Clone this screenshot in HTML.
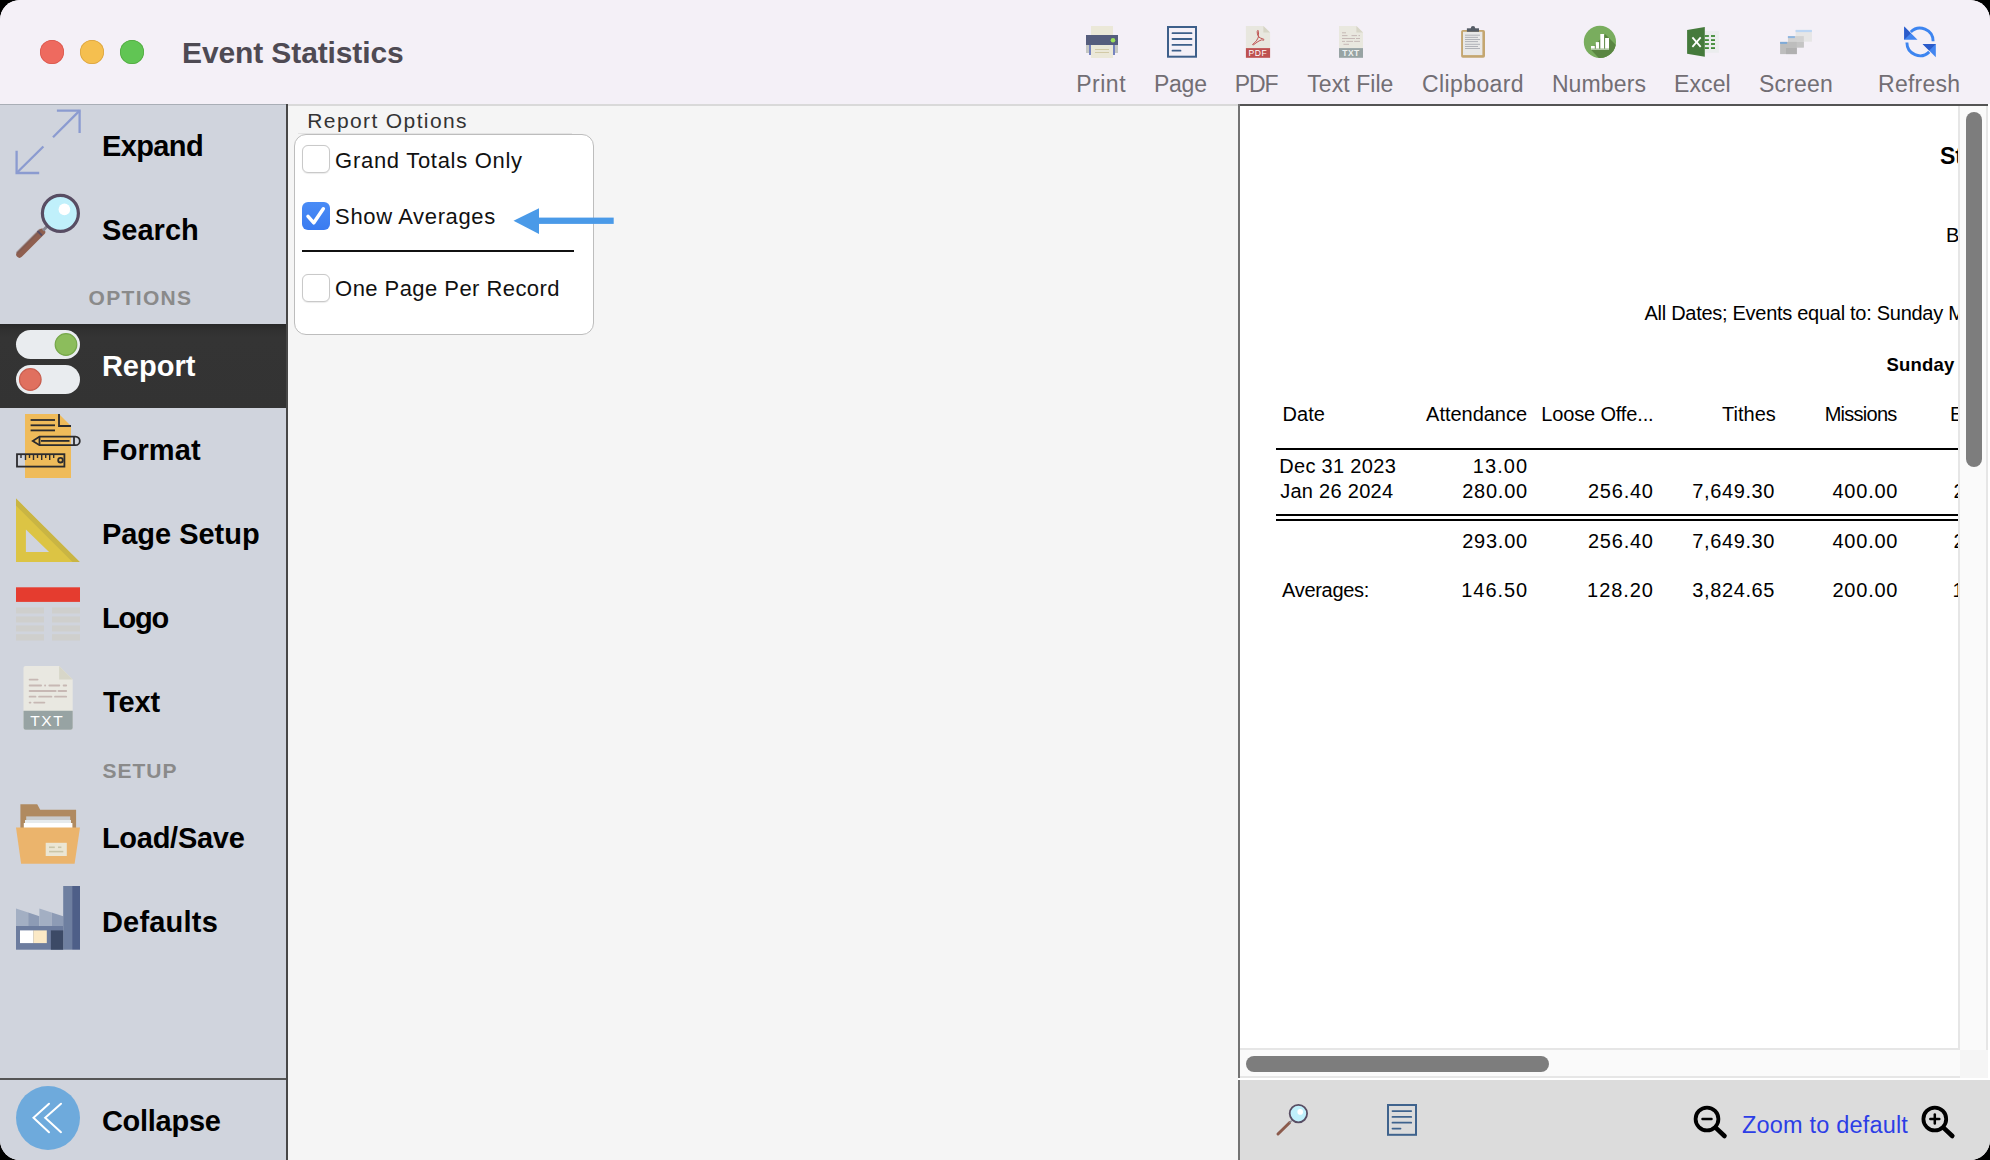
<!DOCTYPE html>
<html><head><meta charset="utf-8"><style>
html,body{margin:0;padding:0;width:1990px;height:1160px;overflow:hidden;background:#000}
.win{position:absolute;left:0;top:0;width:1990px;height:1160px;border-radius:20px;overflow:hidden;background:#f4f0f7}
.t{position:absolute;white-space:nowrap;line-height:1;font-family:"Liberation Sans",sans-serif}
svg text{font-family:"Liberation Sans",sans-serif}
</style></head><body>
<div class="win">
<div style="position:absolute;left:0px;top:0px;width:1990px;height:104px;background:#f4f0f7;"></div>
<div style="position:absolute;left:39.7px;top:39.7px;width:24px;height:24px;border-radius:50%;background:#ee6a5f;box-shadow:inset 0 0 0 0.7px #d8574c"></div>
<div style="position:absolute;left:79.8px;top:39.7px;width:24px;height:24px;border-radius:50%;background:#f5bf4f;box-shadow:inset 0 0 0 0.7px #d9a23f"></div>
<div style="position:absolute;left:119.9px;top:39.7px;width:24px;height:24px;border-radius:50%;background:#61c554;box-shadow:inset 0 0 0 0.7px #50a83f"></div>
<div class="t" style="top:37.71px;font-size:30px;color:#4e4a53;font-weight:bold;letter-spacing:-0.113px;left:182.00px;">Event Statistics</div>
<div class="t" style="top:72.93px;font-size:23px;color:#726e74;letter-spacing:0.485px;left:1076.30px;">Print</div>
<div class="t" style="top:72.93px;font-size:23px;color:#726e74;letter-spacing:-0.260px;left:1154.00px;">Page</div>
<div class="t" style="top:72.93px;font-size:23px;color:#726e74;letter-spacing:-1.120px;left:1234.70px;">PDF</div>
<div class="t" style="top:72.93px;font-size:23px;color:#726e74;letter-spacing:0.053px;left:1307.30px;">Text File</div>
<div class="t" style="top:72.93px;font-size:23px;color:#726e74;letter-spacing:0.397px;left:1422.00px;">Clipboard</div>
<div class="t" style="top:72.93px;font-size:23px;color:#726e74;letter-spacing:0.120px;left:1551.90px;">Numbers</div>
<div class="t" style="top:72.93px;font-size:23px;color:#726e74;letter-spacing:0.100px;left:1674.00px;">Excel</div>
<div class="t" style="top:72.93px;font-size:23px;color:#726e74;letter-spacing:0.204px;left:1759.00px;">Screen</div>
<div class="t" style="top:72.93px;font-size:23px;color:#726e74;letter-spacing:0.267px;left:1878.00px;">Refresh</div>
<div style="position:absolute;left:0px;top:104px;width:286px;height:1056px;background:#d0d4dd;"></div>
<div style="position:absolute;left:0px;top:104px;width:286px;height:1px;background:#a9aeb6;"></div>
<div style="position:absolute;left:0px;top:324px;width:286px;height:84px;background:linear-gradient(#282828 0px,#303030 6px,#343434 14px,#333333 84px);"></div>
<div style="position:absolute;left:286px;top:104px;width:2px;height:1056px;background:#474747;"></div>
<div style="position:absolute;left:0px;top:1078px;width:286px;height:2px;background:#555555;"></div>
<div class="t" style="top:132.05px;font-size:29px;color:#000;font-weight:bold;letter-spacing:-0.588px;left:101.90px;">Expand</div>
<div class="t" style="top:215.75px;font-size:29px;color:#000;font-weight:bold;letter-spacing:0.044px;left:101.90px;">Search</div>
<div class="t" style="top:351.75px;font-size:29px;color:#fff;font-weight:bold;letter-spacing:0.036px;left:101.90px;">Report</div>
<div class="t" style="top:436.45px;font-size:29px;color:#000;font-weight:bold;letter-spacing:0.088px;left:101.90px;">Format</div>
<div class="t" style="top:520.45px;font-size:29px;color:#000;font-weight:bold;letter-spacing:-0.022px;left:101.90px;">Page Setup</div>
<div class="t" style="top:604.45px;font-size:29px;color:#000;font-weight:bold;letter-spacing:-1.180px;left:101.90px;">Logo</div>
<div class="t" style="top:688.45px;font-size:29px;color:#000;font-weight:bold;letter-spacing:-0.053px;left:102.90px;">Text</div>
<div class="t" style="top:824.45px;font-size:29px;color:#000;font-weight:bold;letter-spacing:-0.265px;left:101.90px;">Load/Save</div>
<div class="t" style="top:908.45px;font-size:29px;color:#000;font-weight:bold;letter-spacing:0.209px;left:101.90px;">Defaults</div>
<div class="t" style="top:1107.25px;font-size:29px;color:#000;font-weight:bold;letter-spacing:-0.260px;left:101.90px;">Collapse</div>
<div class="t" style="top:287.12px;font-size:21px;color:#8a8a8a;font-weight:bold;letter-spacing:1.337px;left:88.60px;">OPTIONS</div>
<div class="t" style="top:759.92px;font-size:21px;color:#8a8a8a;font-weight:bold;letter-spacing:1.045px;left:102.40px;">SETUP</div>
<div style="position:absolute;left:288px;top:104px;width:950px;height:1056px;background:#f5f5f5;"></div>
<div style="position:absolute;left:288px;top:104px;width:950px;height:2px;background:#d9d9d9;"></div>
<div style="position:absolute;left:298px;top:132.5px;width:274px;height:1.2px;background:#e4e4e4;"></div>
<div class="t" style="top:110.22px;font-size:21px;color:#333;letter-spacing:1.385px;left:307.30px;">Report Options</div>
<div style="position:absolute;left:294px;top:133.8px;width:300px;height:201.7px;border:1px solid #bdbdbd;border-radius:12px;background:#fff;box-sizing:border-box"></div>
<div style="position:absolute;left:302px;top:145px;width:28px;height:28px;border:1px solid #c9c9c9;border-radius:6px;background:#fff;box-sizing:border-box;box-shadow:0 0.5px 1px rgba(0,0,0,0.08)"></div>
<div style="position:absolute;left:302px;top:274px;width:28px;height:28px;border:1px solid #c9c9c9;border-radius:6px;background:#fff;box-sizing:border-box;box-shadow:0 0.5px 1px rgba(0,0,0,0.08)"></div>
<div style="position:absolute;left:302px;top:202px;width:28px;height:28px;border-radius:6px;background:linear-gradient(#4a8cf6,#3a7bf0)"></div>
<div style="position:absolute;left:302px;top:250px;width:272px;height:2px;background:#111;"></div>
<div class="t" style="top:150.18px;font-size:22px;color:#111;letter-spacing:0.708px;left:335.10px;">Grand Totals Only</div>
<div class="t" style="top:206.48px;font-size:22px;color:#111;letter-spacing:0.637px;left:335.10px;">Show Averages</div>
<div class="t" style="top:278.48px;font-size:22px;color:#111;letter-spacing:0.443px;left:335.10px;">One Page Per Record</div>
<div style="position:absolute;left:1238px;top:104px;width:752px;height:976px;background:#ffffff;"></div>
<div style="position:absolute;left:1238px;top:104px;width:750px;height:2px;background:#545454;"></div>
<div style="position:absolute;left:1238px;top:104px;width:2px;height:974px;background:#737373;"></div>
<div style="position:absolute;left:1958px;top:106px;width:30px;height:944px;background:#fafafa;border-left:2px solid #e6e6e6;border-right:2px solid #e6e6e6;box-sizing:border-box"></div>
<div style="position:absolute;left:1966px;top:112px;width:16px;height:355px;border-radius:8px;background:#7d7d7d"></div>
<div style="position:absolute;left:1240px;top:1048px;width:718px;height:2px;background:#e6e6e6;"></div>
<div style="position:absolute;left:1240px;top:1050px;width:720px;height:28px;background:#fafafa;border-bottom:2px solid #e6e6e6;box-sizing:border-box"></div>
<div style="position:absolute;left:1960px;top:1050px;width:28px;height:28px;background:#f5f5f5;"></div>
<div style="position:absolute;left:1246px;top:1056px;width:303px;height:16px;border-radius:8px;background:#7d7d7d"></div>
<div style="position:absolute;left:1240px;top:1080px;width:750px;height:80px;background:#dcdcdc;"></div>
<div style="position:absolute;left:1238px;top:1078px;width:752px;height:2px;background:#ffffff;"></div>
<div style="position:absolute;left:1238px;top:1080px;width:2px;height:80px;background:#737373;"></div>
<div class="t" style="top:1113.81px;font-size:23.5px;color:#2c3ee6;letter-spacing:0.186px;left:1742.00px;">Zoom to default</div>
<div style="position:absolute;left:0;top:0;width:1990px;height:1160px;clip-path:inset(106px 32px 112px 1240px)">
<div class="t" style="top:144.53px;font-size:23px;color:#000;font-weight:bold;left:1940.00px;">St</div>
<div class="t" style="top:225.07px;font-size:20px;color:#000;left:1946.00px;">B</div>
<div class="t" style="top:302.77px;font-size:20px;color:#000;letter-spacing:-0.282px;left:1644.50px;">All Dates; Events equal to: Sunday M</div>
<div class="t" style="top:356.44px;font-size:18.5px;color:#000;font-weight:bold;letter-spacing:0.220px;left:1886.40px;">Sunday</div>
<div class="t" style="top:404.47px;font-size:20px;color:#000;left:1282.60px;">Date</div>
<div class="t" style="top:404.47px;font-size:20px;color:#000;letter-spacing:-0.027px;left:1426.10px;">Attendance</div>
<div class="t" style="top:404.47px;font-size:20px;color:#000;letter-spacing:-0.143px;left:1541.20px;">Loose Offe...</div>
<div class="t" style="top:404.47px;font-size:20px;color:#000;left:1722.10px;">Tithes</div>
<div class="t" style="top:404.47px;font-size:20px;color:#000;letter-spacing:-0.746px;left:1824.70px;">Missions</div>
<div class="t" style="top:404.47px;font-size:20px;color:#000;left:1950.00px;">E</div>
<div style="position:absolute;left:1276px;top:448px;width:682px;height:2px;background:#000;"></div>
<div class="t" style="top:455.57px;font-size:20px;color:#000;letter-spacing:0.318px;left:1279.20px;">Dec 31 2023</div>
<div class="t" style="top:455.57px;font-size:20px;color:#000;letter-spacing:1.080px;left:1472.78px;">13.00</div>
<div class="t" style="top:481.07px;font-size:20px;color:#000;letter-spacing:0.280px;left:1280.20px;">Jan 26 2024</div>
<div class="t" style="top:481.07px;font-size:20px;color:#000;letter-spacing:0.764px;left:1462.18px;">280.00</div>
<div class="t" style="top:481.07px;font-size:20px;color:#000;letter-spacing:0.764px;left:1587.98px;">256.40</div>
<div class="t" style="top:481.07px;font-size:20px;color:#000;letter-spacing:0.629px;left:1692.20px;">7,649.30</div>
<div class="t" style="top:481.07px;font-size:20px;color:#000;letter-spacing:0.764px;left:1832.48px;">400.00</div>
<div class="t" style="top:481.07px;font-size:20px;color:#000;left:1953.40px;">2</div>
<div style="position:absolute;left:1276px;top:514px;width:682px;height:2px;background:#000;"></div>
<div style="position:absolute;left:1276px;top:519px;width:682px;height:2px;background:#000;"></div>
<div class="t" style="top:531.37px;font-size:20px;color:#000;letter-spacing:0.764px;left:1462.18px;">293.00</div>
<div class="t" style="top:531.37px;font-size:20px;color:#000;letter-spacing:0.764px;left:1587.98px;">256.40</div>
<div class="t" style="top:531.37px;font-size:20px;color:#000;letter-spacing:0.629px;left:1692.20px;">7,649.30</div>
<div class="t" style="top:531.37px;font-size:20px;color:#000;letter-spacing:0.764px;left:1832.48px;">400.00</div>
<div class="t" style="top:531.37px;font-size:20px;color:#000;left:1953.40px;">2</div>
<div class="t" style="top:580.47px;font-size:20px;color:#000;letter-spacing:-0.320px;left:1282.10px;">Averages:</div>
<div class="t" style="top:580.47px;font-size:20px;color:#000;letter-spacing:0.944px;left:1461.28px;">146.50</div>
<div class="t" style="top:580.47px;font-size:20px;color:#000;letter-spacing:0.944px;left:1587.08px;">128.20</div>
<div class="t" style="top:580.47px;font-size:20px;color:#000;letter-spacing:0.629px;left:1692.20px;">3,824.65</div>
<div class="t" style="top:580.47px;font-size:20px;color:#000;letter-spacing:0.764px;left:1832.48px;">200.00</div>
<div class="t" style="top:580.47px;font-size:20px;color:#000;left:1952.40px;">1</div>
</div>
<svg style="position:absolute;left:0;top:0" width="1990" height="1160" viewBox="0 0 1990 1160"><g stroke="#8b9bd0" stroke-width="2.3" fill="none" stroke-linecap="butt"><polyline points="56.9,110.6 79.6,110.6 79.6,133"/><line x1="79.6" y1="110.6" x2="53" y2="137.2"/><polyline points="16.6,150.8 16.6,173 39.2,173"/><line x1="16.6" y1="173" x2="43.4" y2="146.5"/></g><line x1="19.5" y1="254.5" x2="42" y2="232" stroke="#8f5f4f" stroke-width="6.5" stroke-linecap="round"/><line x1="17.5" y1="252.5" x2="40" y2="230" stroke="#7c5a52" stroke-width="2.5" stroke-linecap="round" opacity="0.6"/><line x1="37.5" y1="231" x2="42" y2="235.5" stroke="#584d63" stroke-width="1.8"/><line x1="43" y1="230.5" x2="48" y2="225.5" stroke="#8a8893" stroke-width="3"/><circle cx="60.4" cy="213.3" r="18" fill="#c0f0fb" stroke="#584d63" stroke-width="3.2"/><circle cx="64.4" cy="209.4" r="5.8" fill="#fff"/><rect x="16" y="330" width="64" height="29" rx="14.5" fill="#e9ecef"/><circle cx="66" cy="344.5" r="10.8" fill="#8cbd5c" stroke="#76a74a" stroke-width="1.2"/><rect x="16" y="365" width="64" height="29" rx="14.5" fill="#e9ecef"/><circle cx="30.3" cy="379.5" r="10.8" fill="#e0705f" stroke="#c85f50" stroke-width="1.2"/><polygon points="25,414 59,414 71,426 71,478 25,478" fill="#efbb5a"/><g stroke="#2b2b2e" stroke-width="1.8" fill="none"><polyline points="59,414 59,426 71,426"/><line x1="30.6" y1="420" x2="55" y2="420"/><line x1="30.6" y1="425.3" x2="55" y2="425.3"/><line x1="30.6" y1="430.4" x2="55" y2="430.4"/><path d="M39.5,436.6 L75.5,436.6 A4.3,4.3 0 0 1 75.5,445.2 L39.5,445.2 L32.8,440.9 Z"/><line x1="39.5" y1="436.6" x2="39.5" y2="445.2"/><line x1="41" y1="440.9" x2="69.5" y2="440.9"/><line x1="74" y1="436.6" x2="74" y2="445.2"/><rect x="17" y="454.2" width="47.4" height="12.4"/><circle cx="60.5" cy="460.2" r="2.3"/></g><g stroke="#2b2b2e" stroke-width="1.4"><line x1="21" y1="454" x2="21" y2="458"/><line x1="25.5" y1="454" x2="25.5" y2="460"/><line x1="29.5" y1="454" x2="29.5" y2="458"/><line x1="33.5" y1="454" x2="33.5" y2="460"/><line x1="37.5" y1="454" x2="37.5" y2="458"/><line x1="41.7" y1="454" x2="41.7" y2="460"/><line x1="45.7" y1="454" x2="45.7" y2="458"/><line x1="49.7" y1="454" x2="49.7" y2="460"/><line x1="53.7" y1="454" x2="53.7" y2="458"/></g><path d="M16,498.6 L79.7,562 L16,562 Z M25.9,529.6 L25.9,552 L49.1,552 Z" fill="#dcc444" fill-rule="evenodd"/><polygon points="16,498.6 79.7,562 72.5,562 16,505.6" fill="#c9b543"/><rect x="16" y="587.3" width="64" height="14.6" fill="#e53c2f"/><rect x="16" y="607.4" width="28" height="6.1" fill="#cfcfcd"/><rect x="52" y="607.4" width="28" height="6.1" fill="#cfcfcd"/><rect x="16" y="616.4" width="28" height="6.1" fill="#cfcfcd"/><rect x="52" y="616.4" width="28" height="6.1" fill="#cfcfcd"/><rect x="16" y="625.4" width="28" height="6.1" fill="#cfcfcd"/><rect x="52" y="625.4" width="28" height="6.1" fill="#cfcfcd"/><rect x="16" y="634.2" width="28" height="6.4" fill="#cfcfcd"/><rect x="52" y="634.2" width="28" height="6.4" fill="#cfcfcd"/><path d="M25.5,666 L59.1,666 L72.7,679.6 L72.7,727.7 Q72.7,729.7 70.7,729.7 L25.5,729.7 Q23.5,729.7 23.5,727.7 L23.5,668 Q23.5,666 25.5,666 Z" fill="#e9e8e1"/><polygon points="59.1,666 59.1,679.6 72.7,679.6" fill="#d7d6c8"/><path d="M23.5,710.7 L72.7,710.7 L72.7,727.7 Q72.7,729.7 70.7,729.7 L25.5,729.7 Q23.5,729.7 23.5,727.7 Z" fill="#97a3a3"/><text x="47.2" y="726" font-family="Liberation Sans" font-size="15.5" fill="#fff" text-anchor="middle" letter-spacing="1.6">TXT</text><g stroke="#c7b8b4" stroke-width="1.8" stroke-linecap="round"><line x1="29.6" y1="679.6" x2="37.6" y2="679.6"/><line x1="29.6" y1="685.5" x2="41.1" y2="685.5"/><line x1="45" y1="685.5" x2="45.2" y2="685.5"/><line x1="49.3" y1="685.5" x2="59.3" y2="685.5"/><line x1="63.6" y1="685.5" x2="66.2" y2="685.5"/><line x1="29.6" y1="691" x2="55.7" y2="691"/><line x1="58.5" y1="691" x2="66.2" y2="691"/><line x1="29.6" y1="696.7" x2="35.5" y2="696.7"/><line x1="39.1" y1="696.7" x2="51.4" y2="696.7"/><line x1="55" y1="696.7" x2="66.2" y2="696.7"/><line x1="29.6" y1="702.6" x2="30.5" y2="702.6"/><line x1="34.2" y1="702.6" x2="44.4" y2="702.6"/></g><polygon points="20.4,804.2 37.2,804.2 40.2,809.8 76.1,809.8 76.1,830 20.4,830" fill="#b08a60"/><rect x="26.2" y="816.4" width="44" height="4" fill="#c9cbcc"/><rect x="25" y="820" width="46" height="4" fill="#e6ebee"/><rect x="23.8" y="823" width="48.6" height="5" fill="#ffffff"/><polygon points="16,827.4 80,827.4 74.6,863.7 21.1,863.7" fill="#ebb46c"/><rect x="45.7" y="842.8" width="21.1" height="13.2" fill="#ebe6d4"/><g stroke="#c9c5a8" stroke-width="1.6"><line x1="49" y1="847.3" x2="54.8" y2="847.3"/><line x1="58" y1="847.3" x2="61.4" y2="847.3"/><line x1="49" y1="851.6" x2="63.3" y2="851.6"/></g><rect x="16" y="926" width="47.2" height="23.7" fill="#6c7c9e"/><polygon points="16,908.4 28.2,912.4 28.2,926 16,926" fill="#a3afc3"/><polygon points="28.2,912.4 39.4,916.2 39.4,926 28.2,926" fill="#8d9bb5"/><polygon points="39.4,908.4 51.6,912.4 51.6,926 39.4,926" fill="#a3afc3"/><polygon points="51.6,912.4 63.2,916.2 63.2,926 51.6,926" fill="#8d9bb5"/><rect x="63.2" y="886" width="8.9" height="63.7" fill="#6e7fa0"/><rect x="72.1" y="886" width="7.9" height="63.7" fill="#4e5f88"/><rect x="20" y="930.4" width="13.3" height="12.7" fill="#ffffff"/><rect x="33.3" y="930.4" width="13.5" height="12.7" fill="#fbe9c6"/><rect x="50.9" y="930.4" width="12.3" height="19.3" fill="#3c4a66"/><circle cx="48" cy="1118" r="32" fill="#6eaadc"/><g stroke="#fff" stroke-width="2" fill="none" stroke-linecap="round" stroke-linejoin="miter"><polyline points="61,1103.7 45.2,1117.8 61,1132.2"/><polyline points="49,1103.7 33.5,1117.8 49,1132.2"/></g><path d="M513.5,220.7 L539,208.2 L539,234 Z" fill="#4a9ae8"/><rect x="538" y="217.6" width="75.7" height="6.3" fill="#4a9ae8"/><path d="M308,216.3 L313.8,222.8 L323.3,208.8" fill="none" stroke="#fff" stroke-width="3.5" stroke-linecap="round" stroke-linejoin="round"/><rect x="1091" y="26" width="22" height="9" fill="#ebe8d8"/><rect x="1086" y="35" width="32" height="10" fill="#555d7d"/><rect x="1086" y="45" width="5" height="8" fill="#c5c7c3"/><rect x="1113" y="45" width="5" height="8" fill="#c5c7c3"/><rect x="1089" y="45" width="2" height="10" fill="#7583c0"/><rect x="1113" y="45" width="2" height="10" fill="#7583c0"/><rect x="1091" y="45" width="22" height="13" fill="#ebe8d8"/><line x1="1095" y1="49.5" x2="1109" y2="49.5" stroke="#cfc6a2" stroke-width="0.9"/><line x1="1095" y1="52.5" x2="1109" y2="52.5" stroke="#cfc6a2" stroke-width="0.9"/><circle cx="1113" cy="40.3" r="2.3" fill="#9be05a"/><rect x="1168" y="27" width="28" height="29.700000000000003" fill="none" stroke="#3d5f8a" stroke-width="2"/><line x1="1172.5" y1="33.2" x2="1191.5" y2="33.2" stroke="#3d5f8a" stroke-width="1.8" stroke-linecap="round"/><line x1="1172.5" y1="39" x2="1191.5" y2="39" stroke="#3d5f8a" stroke-width="1.8" stroke-linecap="round"/><line x1="1172.5" y1="44.9" x2="1191.5" y2="44.9" stroke="#3d5f8a" stroke-width="1.8" stroke-linecap="round"/><line x1="1172.5" y1="50.7" x2="1180.5" y2="50.7" stroke="#3d5f8a" stroke-width="1.8" stroke-linecap="round"/><polygon points="1245.9,26 1263.4,26 1270.1,32.6 1270.1,48.1 1245.9,48.1" fill="#e8e7df"/><polygon points="1263.4,26 1263.4,32.6 1270.1,32.6" fill="#d6d5c6"/><rect x="1245.9" y="48.1" width="24.2" height="9.7" fill="#be5150"/><text x="1258" y="56" font-family="Liberation Sans" font-size="8.5" fill="#fff" text-anchor="middle" letter-spacing="0.6">PDF</text><path d="M1257.8,30.4 C1256.5,31 1257.5,35 1258.5,36.8 C1257.5,39.5 1255.5,42.5 1253.2,43.8 C1252.3,44.3 1252.5,45.2 1253.4,44.8 C1255.6,43.5 1258,41 1261.5,39.9 C1262.5,39.8 1264.3,40.8 1264,39.6 C1263.5,38.6 1261.2,39 1258.6,36.8 C1258.3,34.5 1258.8,30 1257.8,30.4 Z" fill="none" stroke="#be5150" stroke-width="1"/><polygon points="1339,26 1356.4,26 1363,32.6 1363,48.1 1339,48.1" fill="#e9e8df"/><polygon points="1356.4,26 1356.4,32.6 1363,32.6" fill="#d7d5c7"/><rect x="1339" y="48.1" width="24" height="9.7" fill="#97a3a3"/><text x="1351" y="56" font-family="Liberation Sans" font-size="8.5" font-weight="bold" fill="#eef0f0" text-anchor="middle" letter-spacing="0.5">TXT</text><g stroke="#c2b3b1" stroke-width="0.9"><line x1="1342" y1="32.8" x2="1346" y2="32.8"/><line x1="1342" y1="35.6" x2="1347.5" y2="35.6"/><line x1="1351.5" y1="35.6" x2="1357" y2="35.6"/><line x1="1358.5" y1="35.6" x2="1360" y2="35.6"/><line x1="1342" y1="38.5" x2="1355" y2="38.5"/><line x1="1356" y1="38.5" x2="1360" y2="38.5"/><line x1="1342" y1="41.4" x2="1345" y2="41.4"/><line x1="1346.3" y1="41.4" x2="1353" y2="41.4"/><line x1="1354.2" y1="41.4" x2="1360" y2="41.4"/><line x1="1343.5" y1="44.3" x2="1349" y2="44.3"/></g><rect x="1461.1" y="29.9" width="23.9" height="27.9" rx="1.8" fill="#c4a670"/><rect x="1463" y="31.8" width="19.4" height="23.3" fill="#e8e8e8"/><rect x="1466.9" y="28.3" width="12.1" height="3.5" fill="#555c66"/><circle cx="1473" cy="28.3" r="2.2" fill="#555c66"/><g stroke="#a9acb2" stroke-width="0.9"><line x1="1465" y1="35.2" x2="1480" y2="35.2"/><line x1="1465" y1="37.4" x2="1478" y2="37.4"/><line x1="1465" y1="39.5" x2="1480" y2="39.5"/><line x1="1465" y1="41.6" x2="1478" y2="41.6"/><line x1="1465" y1="44.3" x2="1480" y2="44.3"/><line x1="1465" y1="46.5" x2="1478" y2="46.5"/><line x1="1465" y1="48.5" x2="1480" y2="48.5"/></g><defs><clipPath id="nc"><circle cx="1599.9" cy="41.9" r="16.1"/></clipPath></defs><circle cx="1599.9" cy="41.9" r="16.1" fill="#79ad5e"/><polygon clip-path="url(#nc)" points="1591,49.8 1605,34 1609,38 1630,59 1612,72 1591,49.8" fill="#5a8642"/><rect x="1591" y="46" width="3.8" height="2.7" fill="#fff"/><rect x="1595.8" y="42.1" width="3.3" height="6.6" fill="#fff"/><rect x="1600.3" y="34" width="3.8" height="14.7" fill="#fff"/><rect x="1605.1" y="38" width="3.9" height="10.7" fill="#fff"/><rect x="1591" y="48.7" width="18" height="1.1" fill="#c5d8bb"/><rect x="1704.8" y="31" width="14.1" height="21.8" fill="#ebedee"/><polygon points="1687.1,30.1 1704.8,27 1704.8,56.7 1687.1,53.7" fill="#457a3c"/><rect x="1704.8" y="35.1" width="4.1" height="1.8" fill="#3f8a35"/><rect x="1711" y="35.1" width="4" height="1.8" fill="#3f8a35"/><rect x="1704.8" y="39.2" width="4.1" height="1.8" fill="#3f8a35"/><rect x="1711" y="39.2" width="4" height="1.8" fill="#3f8a35"/><rect x="1704.8" y="43.1" width="4.1" height="1.8" fill="#3f8a35"/><rect x="1711" y="43.1" width="4" height="1.8" fill="#3f8a35"/><rect x="1704.8" y="47.2" width="4.1" height="1.8" fill="#3f8a35"/><rect x="1711" y="47.2" width="4" height="1.8" fill="#3f8a35"/><g stroke="#fff" stroke-width="1.8" stroke-linecap="butt"><line x1="1692.4" y1="37.3" x2="1700.7" y2="46.8"/><line x1="1700.7" y1="37.3" x2="1692.4" y2="46.8"/></g><g filter="url(#bl)"><rect x="1795.6" y="29.9" width="16.3" height="11.8" fill="#e6e6e6"/><rect x="1795.6" y="29.9" width="16.3" height="2.2" fill="#bcd6f4"/><rect x="1787.9" y="36.1" width="15.9" height="11.4" fill="#d2d2d2"/><rect x="1787.9" y="36.1" width="7" height="2" fill="#8fb6e0"/><rect x="1793.5" y="42" width="10.3" height="5.5" fill="#c4c4c4"/><rect x="1780.1" y="41.9" width="16.7" height="12.2" fill="#bdbdbd"/><rect x="1780.1" y="41.9" width="7" height="2" fill="#7faad8"/><rect x="1786" y="48" width="10.8" height="6.1" fill="#b0b0b0"/></g><defs><filter id="bl" x="-20%" y="-20%" width="140%" height="140%"><feGaussianBlur stdDeviation="0.65"/></filter></defs><g fill="none" stroke="#3d85f0" stroke-width="2.9"><path d="M1910.74,31.94 A13.1,13.1 0 0 1 1933.1,41.2"/><path d="M1906.9,42.6 A13.1,13.1 0 0 0 1929.26,51.86"/></g><polygon points="1904.2,26.6 1904.2,39.8 1917.5,39.8" fill="#4285f0"/><polygon points="1904.2,26.6 1904.2,39.8 1910.8,33.2" fill="#2c5bc9"/><polygon points="1935.8,57.2 1935.8,44 1922.6,44" fill="#4285f0"/><polygon points="1935.8,44 1922.6,44 1929.2,50.6" fill="#2c5bc9"/><line x1="1278" y1="1134" x2="1289.5" y2="1122.7" stroke="#8c5b4c" stroke-width="3" stroke-linecap="round"/><line x1="1289.5" y1="1122.7" x2="1291.5" y2="1120.7" stroke="#8a8893" stroke-width="1.5"/><circle cx="1298.4" cy="1113.6" r="8.7" fill="#c0f0fb" stroke="#584d63" stroke-width="1.8"/><circle cx="1300.2" cy="1111.9" r="2.8" fill="#fff"/><rect x="1388" y="1105" width="28" height="29.799999999999955" fill="none" stroke="#3f638d" stroke-width="2"/><line x1="1392.5" y1="1111.1" x2="1411.2" y2="1111.1" stroke="#3f638d" stroke-width="1.8" stroke-linecap="round"/><line x1="1392.5" y1="1116.9" x2="1411.2" y2="1116.9" stroke="#3f638d" stroke-width="1.8" stroke-linecap="round"/><line x1="1392.5" y1="1122.7" x2="1411.2" y2="1122.7" stroke="#3f638d" stroke-width="1.8" stroke-linecap="round"/><line x1="1392.5" y1="1128.6" x2="1400.5" y2="1128.6" stroke="#3f638d" stroke-width="1.8" stroke-linecap="round"/><circle cx="1707" cy="1119" r="11.4" fill="none" stroke="#000" stroke-width="3.8"/><line x1="1715.6" y1="1127.6" x2="1724.5" y2="1136" stroke="#000" stroke-width="4.6" stroke-linecap="round"/><line x1="1702.5" y1="1119" x2="1711.5" y2="1119" stroke="#000" stroke-width="2.5" stroke-linecap="round"/><circle cx="1934.8" cy="1119" r="11.4" fill="none" stroke="#000" stroke-width="3.8"/><line x1="1943.3999999999999" y1="1127.6" x2="1952.3" y2="1136" stroke="#000" stroke-width="4.6" stroke-linecap="round"/><line x1="1930.3" y1="1119" x2="1939.3" y2="1119" stroke="#000" stroke-width="2.5" stroke-linecap="round"/><line x1="1934.8" y1="1114.5" x2="1934.8" y2="1123.5" stroke="#000" stroke-width="2.5" stroke-linecap="round"/></svg>
</div>
</body></html>
